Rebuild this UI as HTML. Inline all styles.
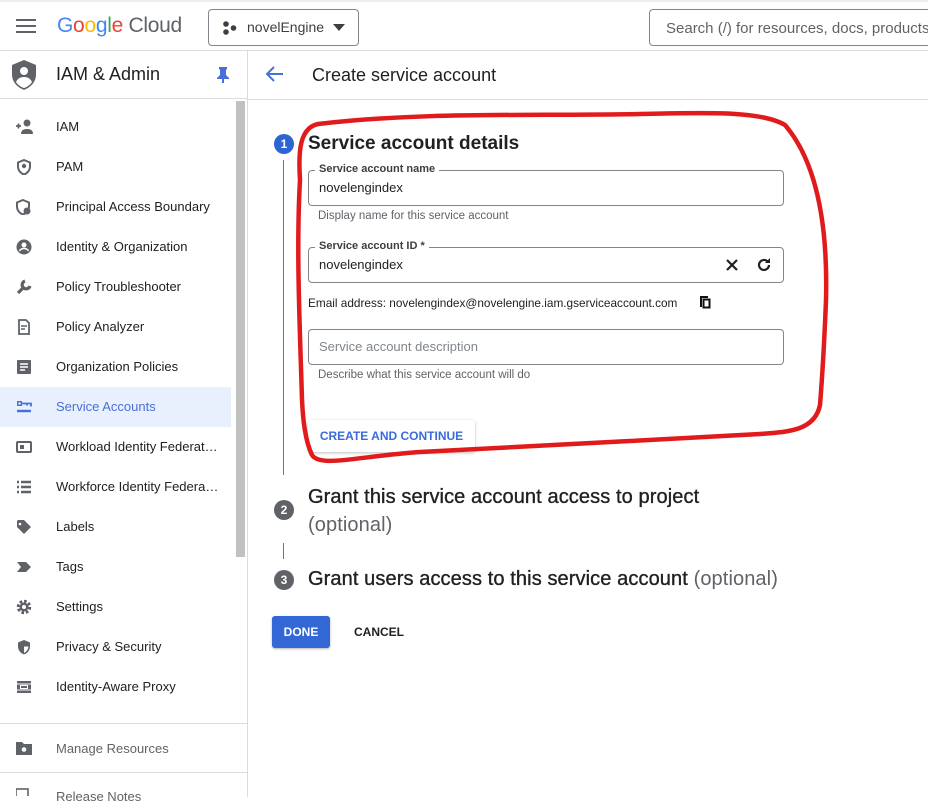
<!DOCTYPE html>
<html><head><meta charset="utf-8"><style>
*{box-sizing:border-box;margin:0;padding:0}
body{width:928px;height:797px;overflow:hidden;background:#fff;font-family:"Liberation Sans",Arial,sans-serif;color:#202124;position:relative}
.abs{position:absolute}
.top{left:0;top:0;width:928px;height:51px;border-bottom:1px solid #dadce0;border-top:2px solid #eee}
.nav{left:0;top:51px;width:248px;height:746px;border-right:1px solid #dadce0}
.item{position:absolute;left:0;width:231px;height:40px;font-size:13px;line-height:40px;padding-left:56px;color:#202124;white-space:nowrap}
.item svg{position:absolute;left:16px;top:12px}
.field{position:absolute;border:1px solid #80868b;border-radius:4px;background:#fff}
.lbl{position:absolute;top:-8px;left:6px;background:#fff;padding:0 4px;font-size:11px;font-weight:bold;color:#3c4043}
.val{position:absolute;left:10px;top:9px;font-size:13px;color:#202124}
.help{position:absolute;font-size:11.5px;color:#5f6368}
.step{position:absolute;width:20px;height:20px;border-radius:50%;color:#fff;font-size:12px;font-weight:bold;text-align:center;line-height:20px}
.gr{font-size:20px;letter-spacing:0.1px;-webkit-text-stroke:0.35px #202124}
</style></head><body>
<div class="abs top">
 <svg class="abs" style="left:16px;top:16px" width="20" height="16"><rect y="1" width="20" height="2" fill="#5f6368"/><rect y="7" width="20" height="2" fill="#5f6368"/><rect y="13" width="20" height="2" fill="#5f6368"/></svg>
 <div class="abs" style="left:57px;top:12px;font-size:21px;letter-spacing:-0.3px"><span style="color:#4285f4">G</span><span style="color:#ea4335">o</span><span style="color:#fbbc04">o</span><span style="color:#4285f4">g</span><span style="color:#34a853">l</span><span style="color:#ea4335">e</span> <span style="color:#5f6368">Cloud</span></div>
 <div class="abs" style="left:208px;top:7px;width:151px;height:37px;border:1px solid #80868b;border-radius:4px">
  <svg class="abs" style="left:14px;top:11px" width="14" height="14"><circle cx="3" cy="3" r="2.8" fill="#3c4043"/><circle cx="3" cy="11" r="2.8" fill="#3c4043"/><circle cx="10.5" cy="7" r="2.8" fill="#3c4043"/></svg>
  <div class="abs" style="left:38px;top:9px;font-size:14px;color:#3c4043">novelEngine</div>
  <svg class="abs" style="left:124px;top:14px" width="12" height="7"><path d="M0 0h12L6 7z" fill="#3c4043"/></svg>
 </div>
 <div class="abs" style="left:649px;top:7px;width:300px;height:37px;border:1px solid #80868b;border-radius:4px;background:#fff">
  <div class="abs" style="left:16px;top:10px;font-size:15px;color:#5f6368;white-space:nowrap">Search (/) for resources, docs, products</div>
 </div>
</div>
<div class="abs nav">
 <div class="abs" style="left:0;top:0;width:247px;height:48px;border-bottom:1px solid #dadce0">
  <svg class="abs" style="left:12px;top:9px" width="24" height="30" viewBox="0 0 24 30"><path d="M12 0L24 5v9c0 8-5 13-12 16C5 27 0 22 0 14V5z" fill="#5f6368"/><circle cx="12" cy="11" r="4" fill="#fff"/><path d="M4 22c2-4 5-5 8-5s6 1 8 5c-2 3-5 5-8 6-3-1-6-3-8-6z" fill="#fff"/></svg>
  <div class="abs" style="left:56px;top:13px;font-size:18px;color:#202124">IAM &amp; Admin</div>
  <svg class="abs" style="left:217px;top:16px" width="12" height="16"><path d="M2 0h8v2l-1 1v5l3 3v1H7v4H5v-4H0v-1l3-3V3L2 2z" fill="#4a6fd6"/></svg>
 </div>
 <div class="abs" style="left:236px;top:50px;width:9px;height:456px;background:#c1c1c1"></div>
 <div class="item" style="top:56px"><svg width="18" height="16"><path d="M0 7h5M2.5 4.5v5" stroke="#5f6368" stroke-width="1.8"/><circle cx="11" cy="4" r="3.5" fill="#5f6368"/><path d="M5 15c0-4 3-5 6-5s6 1 6 5z" fill="#5f6368"/></svg>IAM</div>
 <div class="item" style="top:96px"><svg width="16" height="16"><path d="M8 1l6 2.5v4c0 4-3 7-6 8-3-1-6-4-6-8v-4z" fill="none" stroke="#5f6368" stroke-width="2"/><circle cx="8" cy="7" r="2.2" fill="#5f6368"/></svg>PAM</div>
 <div class="item" style="top:136px"><svg width="16" height="16"><path d="M7 1l6 2.5v4c0 4-3 7-6 8-3-1-6-4-6-8v-4z" fill="none" stroke="#5f6368" stroke-width="2"/><circle cx="11" cy="12" r="3.5" fill="#5f6368"/></svg>Principal Access Boundary</div>
 <div class="item" style="top:176px"><svg width="16" height="16"><circle cx="8" cy="8" r="7.5" fill="#5f6368"/><circle cx="8" cy="6" r="2.5" fill="#fff"/><path d="M3.5 12c1-2 3-2.5 4.5-2.5s3.5.5 4.5 2.5" stroke="#fff" stroke-width="1.5" fill="none"/></svg>Identity &amp; Organization</div>
 <div class="item" style="top:216px"><svg width="16" height="16"><path d="M2 14l6-6M9 2a4 4 0 1 0 5 5" stroke="#5f6368" stroke-width="3.2" fill="none"/></svg>Policy Troubleshooter</div>
 <div class="item" style="top:256px"><svg width="16" height="16"><path d="M3 1h7l3 3v11H3z" fill="none" stroke="#5f6368" stroke-width="1.8"/><path d="M5 7h6M5 10h4" stroke="#5f6368" stroke-width="1.6"/></svg>Policy Analyzer</div>
 <div class="item" style="top:296px"><svg width="16" height="16"><rect x="1" y="1" width="14" height="14" rx="1" fill="#5f6368"/><path d="M4 5h8M4 8h8M4 11h5" stroke="#fff" stroke-width="1.4"/></svg>Organization Policies</div>
 <div class="item" style="top:336px;background:#e8f0fe;color:#4a6fd6"><svg width="16" height="16"><rect x="1" y="2" width="5" height="5" fill="#4a6fd6"/><rect x="2.5" y="3.5" width="2" height="2" fill="#fff"/><path d="M6 4.5h9v3M11 4.5v2" stroke="#4a6fd6" stroke-width="1.8" fill="none"/><path d="M1 12h14" stroke="#4a6fd6" stroke-width="2.4"/></svg>Service Accounts</div>
 <div class="item" style="top:376px"><svg width="16" height="16"><rect x="1" y="3" width="14" height="10" rx="1" fill="none" stroke="#5f6368" stroke-width="2"/><rect x="4" y="6" width="4" height="4" fill="#5f6368"/></svg>Workload Identity Federat…</div>
 <div class="item" style="top:416px"><svg width="16" height="16"><path d="M1 3h2M5 3h10M1 8h2M5 8h10M1 13h2M5 13h10" stroke="#5f6368" stroke-width="2.6"/></svg>Workforce Identity Federa…</div>
 <div class="item" style="top:456px"><svg width="16" height="16"><path d="M1 2v6l7 7 7-7-7-7H2z" fill="#5f6368"/><circle cx="4" cy="5" r="1.3" fill="#fff"/></svg>Labels</div>
 <div class="item" style="top:496px"><svg width="16" height="16"><path d="M1 3h9l5 5-5 5H1l4-5z" fill="#5f6368"/></svg>Tags</div>
 <div class="item" style="top:536px"><svg width="16" height="16"><circle cx="8" cy="8" r="5.5" fill="none" stroke="#5f6368" stroke-width="3.5" stroke-dasharray="2.5 1.8"/><circle cx="8" cy="8" r="4.5" fill="#5f6368"/><circle cx="8" cy="8" r="2" fill="#fff"/></svg>Settings</div>
 <div class="item" style="top:576px"><svg width="16" height="16"><path d="M8 1l6 2.5v4c0 4-3 7-6 8-3-1-6-4-6-8v-4z" fill="#5f6368"/><path d="M8 3v11c2-1 4-3 4.5-6.5H8z" fill="#fff"/></svg>Privacy &amp; Security</div>
 <div class="item" style="top:616px"><svg width="16" height="16"><rect x="1" y="2" width="14" height="12" fill="#5f6368"/><path d="M1 5h14M1 11h14" stroke="#fff" stroke-width="1"/><rect x="4" y="6" width="8" height="4" fill="#fff"/><rect x="5" y="7" width="6" height="2" fill="#5f6368"/></svg>Identity-Aware Proxy</div>
 <div class="abs" style="left:0;top:672px;width:247px;height:50px;border-top:1px solid #dadce0;border-bottom:1px solid #dadce0;background:#fff">
  <svg class="abs" style="left:16px;top:17px" width="16" height="14"><path d="M0 1h6l2 2h8v11H0z" fill="#5f6368"/><circle cx="8" cy="8.5" r="2.3" fill="#fff"/></svg>
  <div class="abs" style="left:56px;top:17px;font-size:13px;color:#5f6368">Manage Resources</div>
 </div>
 <div class="abs" style="left:56px;top:738px;font-size:13px;color:#5f6368">Release Notes</div>
 <svg class="abs" style="left:16px;top:735px" width="16" height="10"><rect x="0" y="3" width="12" height="8" fill="none" stroke="#5f6368" stroke-width="1.6"/></svg>
</div>
<div class="abs" style="left:248px;top:51px;width:680px;height:49px;border-bottom:1px solid #dadce0">
 <svg class="abs" style="left:18px;top:15px" width="18" height="16"><path d="M17 8H2M8 1L1 8l7 7" stroke="#4a6fd6" stroke-width="2" fill="none"/></svg>
 <div class="abs" style="left:64px;top:14px;font-size:18px;color:#202124">Create service account</div>
</div>
<div class="step" style="left:274px;top:134px;background:#2e64d2">1</div>
<div class="abs" style="left:283px;top:160px;width:1px;height:315px;background:#757575"></div>
<div class="abs" style="left:308px;top:133px;font-size:19px;font-weight:bold;color:#202124">Service account details</div>
<div class="field" style="left:308px;top:170px;width:476px;height:36px"><div class="lbl">Service account name</div><div class="val">novelengindex</div></div>
<div class="help" style="left:318px;top:210px">Display name for this service account</div>
<div class="field" style="left:308px;top:247px;width:476px;height:36px"><div class="lbl">Service account ID *</div><div class="val">novelengindex</div>
 <svg class="abs" style="left:417px;top:11px" width="12" height="12"><path d="M1 1l10 10M11 1L1 11" stroke="#202124" stroke-width="2.2"/></svg>
 <svg class="abs" style="left:447px;top:9px" width="16" height="16"><path d="M13 8a5 5 0 1 1-1.6-3.7" stroke="#202124" stroke-width="2.2" fill="none"/><path d="M14 1v5H9z" fill="#202124"/></svg>
</div>
<div class="abs" style="left:308px;top:296px;font-size:11.8px;color:#202124">Email address: novelengindex@novelengine.iam.gserviceaccount.com</div>
<svg class="abs" style="left:699px;top:295px" width="12" height="14"><path d="M1 1h8v2H3v9H1z" fill="#111"/><rect x="4.5" y="4.5" width="6" height="8" fill="none" stroke="#111" stroke-width="2"/></svg>
<div class="field" style="left:308px;top:329px;width:476px;height:36px"><div class="val" style="color:#80868b">Service account description</div></div>
<div class="help" style="left:318px;top:369px">Describe what this service account will do</div>
<div class="abs" style="left:308px;top:420px;width:167px;height:32px;box-shadow:0 1px 3px rgba(0,0,0,.25);border-radius:3px;background:#fff;font-size:12px;font-weight:bold;color:#3a6bd8;line-height:32px;text-align:center">CREATE AND CONTINUE</div>
<div class="step" style="left:274px;top:500px;background:#5f6368">2</div>
<div class="abs gr" style="left:308px;top:483px;color:#202124;line-height:28px">Grant this service account access to project<br><span style="color:#5f6368;-webkit-text-stroke:0">(optional)</span></div>
<div class="abs" style="left:283px;top:543px;width:1px;height:16px;background:#757575"></div>
<div class="step" style="left:274px;top:570px;background:#5f6368">3</div>
<div class="abs gr" style="left:308px;top:568px;color:#202124">Grant users access to this service account <span style="color:#5f6368;-webkit-text-stroke:0">(optional)</span></div>
<div class="abs" style="left:272px;top:616px;width:58px;height:32px;background:#3367d6;border-radius:3px;color:#fff;font-size:12px;font-weight:bold;line-height:32px;text-align:center;box-shadow:0 1px 2px rgba(0,0,0,.3)">DONE</div>
<div class="abs" style="left:354px;top:625px;font-size:12px;font-weight:bold;color:#202124">CANCEL</div>
<svg class="abs" style="left:0;top:0" width="928" height="797"><path d="M300 180 C298 150 300 128 318 124 C420 112 520 116 640 114 C700 113 760 110 785 125 C815 160 828 220 826 300 C824 350 822 380 820 405 C815 430 790 432 760 434 C650 440 500 448 420 452 C360 456 320 468 312 455 C305 440 303 420 302 400 C300 330 296 250 300 180" fill="none" stroke="#e11b1b" stroke-width="4.5" stroke-linecap="round"/></svg>
</body></html>
